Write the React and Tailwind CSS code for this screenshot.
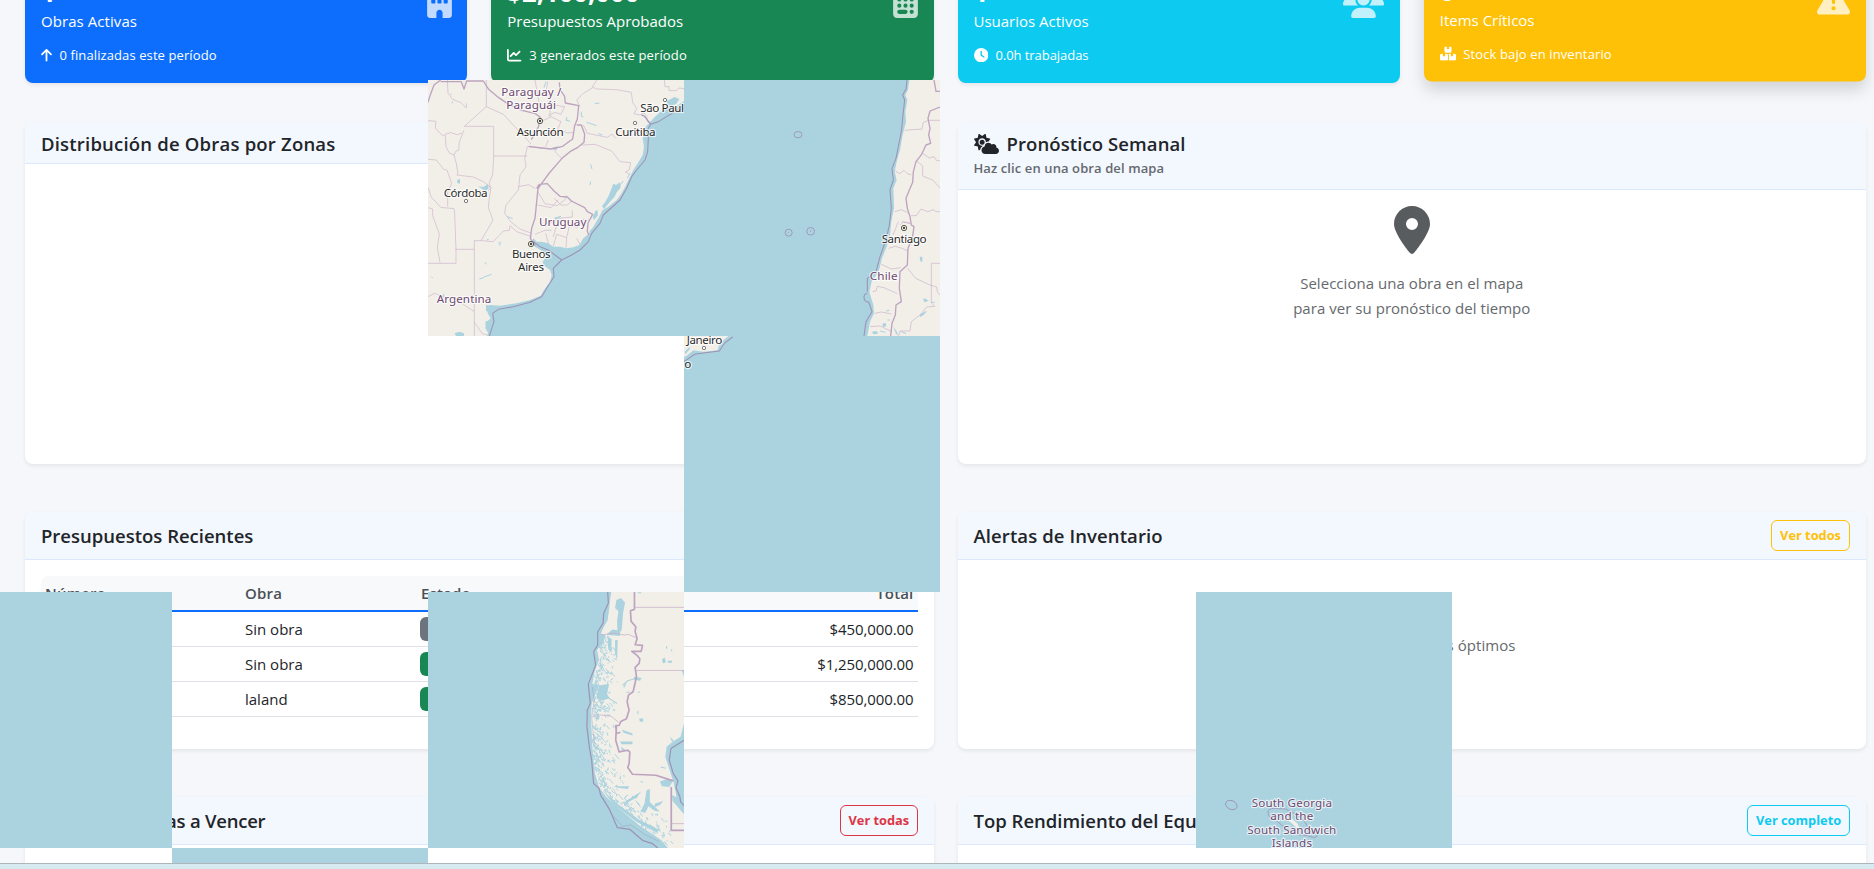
import React from "react";
import {
  FaArrowUp,
  FaBoxesStacked,
  FaBuilding,
  FaCalculator,
  FaChartLine,
  FaClock,
  FaCloudSun,
  FaLocationDot,
  FaTriangleExclamation,
  FaUsers,
} from "react-icons/fa6";

const LAND = "#f2efe9";
const WATER = "#aad3df";
const BORDER = "#c9afc8";
const COUNTRY = "#bda3bf";
const SEA_LINE = "#9c93b4";

function StatCard({ className, icon, iconClass = "", value, label, smallIcon, detail, labelClass = "", detailClass = "" }) {
  return (
    <div className={"flex h-[123px] justify-between rounded-lg px-4 pt-4 text-white " + className}>
      <div>
        <div className="h-[34px] text-[25.7px] leading-[34px] font-bold">{value}</div>
        <div className={"-mt-px text-[15px] leading-6 " + labelClass}>{label}</div>
        <div className={"mt-3 flex items-center gap-[7.5px] text-[13px] leading-5 " + detailClass}>
          <span className="text-[14.4px]">{smallIcon}</span>
          <span>{detail}</span>
        </div>
      </div>
      <div className={"mt-[9px] text-[33px] opacity-75 " + iconClass}>{icon}</div>
    </div>
  );
}

function Panel({ header, headerClass = "", className = "", children }) {
  return (
    <section className={"overflow-hidden rounded-lg bg-white shadow-[0_2px_4px_rgba(0,0,0,0.075)] " + className}>
      <header className={"flex items-center justify-between border-b border-[#dbe8fd] bg-[#f3f7fe] px-4 " + headerClass}>
        {header}
      </header>
      {children}
    </section>
  );
}

function Title({ className = "", children }) {
  return <h5 className={"text-[18.5px] leading-6 font-semibold whitespace-nowrap text-[#212529] " + className}>{children}</h5>;
}

function OutlineButton({ className, children }) {
  return (
    <button className={"h-[31px] rounded-md border px-2 text-[12.8px] leading-none font-bold whitespace-nowrap " + className}>
      {children}
    </button>
  );
}

function Label({ x, y, w, children, country }) {
  return (
    <text
      x={x}
      y={y}
      textLength={w}
      fontFamily="'Noto Sans', sans-serif"
      fontSize="35"
      fill={country ? "#6f4a72" : "#2b2b2b"}
      stroke="#ffffff"
      strokeOpacity="0.7"
      strokeWidth="7"
      strokeLinejoin="round"
      paintOrder="stroke"
    >
      {children}
    </text>
  );
}

function Capital({ x, y }) {
  return (
    <g>
      <circle cx={x} cy={y} r="8" fill={LAND} stroke="#3a3a30" strokeWidth="2.4" />
      <circle cx={x} cy={y} r="3.4" fill="#3a3a30" />
    </g>
  );
}

function City({ x, y }) {
  return <circle cx={x} cy={y} r="5" fill="#fff" stroke="#5c5c5c" strokeWidth="2.4" />;
}

function RioDeLaPlataTile() {
  return (
    <svg className="absolute top-[80px] left-[428px] size-64" viewBox="24 15 768 768" preserveAspectRatio="none">
      <rect x="24" y="15" width="768" height="768" fill={WATER} />
      <path
        fill={LAND}
        d="M24 15H792V78L770 92 745 97 720 112 705 125 690 142 672 160 668 190 672 215 668 240 655 262 640 285 628 310 618 330 605 355 590 375 565 395 548 405 535 430 520 455 505 478 490 490 478 510 460 517 440 520 420 515 400 515 385 505 365 500 350 500 340 490 335 500 345 515 362 525 372 535 375 550 368 560 372 572 390 585 395 600 390 620 372 645 362 662 330 675 290 685 240 692 212 690 200 694 203 715 212 730 200 742 196 760 205 775 200 783H24Z"
      />
      <path
        fill={WATER}
        d="M600 322L602 338 590 352 584 365 570 380 552 402 546 394 556 380 566 362 574 342 580 326 588 330ZM532 404L534 420 522 436 518 426 526 408ZM174 334L190 336 204 328 206 340 196 348 184 340ZM112 314l8-2v14l-8-2ZM398 218l14-4 0 8-12 4ZM198 690l14 2-2 18-12-2ZM196 740l16-6-2 24-12 2ZM104 775l14-5 14 5 0 8H108ZM740 78l24-12 14 6-10 16-24 6ZM403 428l20-6 0 4-18 8ZM72 655l2 12-8-2ZM524 462l-12 12-4-6 12-10Z"
      />
      <path
        fill="none"
        stroke={WATER}
        strokeWidth="3"
        d="M178 612l14-4M192 606l22-8M195 562l4 6M200 495l6-2M235 505l8-4M240 512v-8M512 268l4 14M484 110v14l6 2M524 85h14M500 142l30 10M535 176l12 4M262 425l16 6M34 605l4 4M600 330l10-12M630 295l-8 14M512 320l-2 10M378 20l-6 18M437 135l14 4M440 126v12M96 85l2-6M92 55l2 4"
      />
      <path
        fill="none"
        stroke={BORDER}
        strokeOpacity="0.75"
        strokeWidth="2.4"
        strokeLinejoin="round"
        d="M82 15l2 40 14 18 25 10 16 16V85M24 137l24 2-2 20 14 16 10 8 6-6 16-4 20 6 14-5M76 180l2 36 10 18 14 6 6-12 8-2 2-26 14-34M102 240l8 30 4 30M133 154H221V243H322M199 15V95L133 154M199 95L250 118 275 145 320 192 333 207M322 215L314 250 318 275 300 300 295 345 258 390 254 415 272 440 300 462 335 475M110 300l50 6 30 14 24 18-10 10M24 253l25 2 22 28 10 2 14 40-12 26V395M24 337l10 30 14 14 14 16 40 4 2 14 4 108V565H24M24 398l14 4 0 20 20 55-6 40 8 46M221 243L218 300 208 322 212 345 208 368 205 398 219 435 183 497H163V783M106 523H163M183 497l37 3 30-32 18-2 2-14 20 18 45 15M24 665l20-10 26 10 40 8 30 22 22 14M163 742l25 35 12 2M296 335l30-6 20 12M345 15l10 55 5 30M322 215l55 6M383 20l-6 40 28 30 30 6M385 122l20-10 18 6 10-22M353 145l40-20 30 15-10 22 30 12 18-2M365 180l30-8 20 12M385 195l-8 20M425 250l-20-20 6-12M390 100v25M480 95l-10-20 20-20 30-18 10 5 60 2 44 8 4 30 12 18-8 16 16 4 14-6 8 10 2 16 12 2M530 15l-14 22M733 15l2 20 12 0 0 12 22 0 8-8 16 2M490 150l12 25 60 12 14-10 12 14M485 210l40-2 50 20 25 32 32 3-4 22-12 6 12 6M353 350l22 36 36 6 24-18 4-12M353 390l40 8 22-24M403 370l20 20 20 0 14-14M375 455l22-15 20-10 40-4 0-20M400 486l8-30 14-22M345 478l30-12 20 0M385 505l-8-30M400 514l10-36 30 10-2 30M440 488l8-34 22 2M470 490l10 18M470 460l20-28 16 4"
      />
      <path
        fill="none"
        stroke={COUNTRY}
        strokeWidth="4"
        strokeLinejoin="round"
        d="M24 82l6-20 12-32 20-15M62 20l62 0 8 22 8-24 50 0 16 25 30 25 30 20 40 18 40 10 14 10-4 28-22 40M326 214l66 8 36-8 30-22 6-40 8-20 4-40-40-8-2-20-14-20-2-22M470 150l14 0 10 28-2 24-20 16-22 12-22 18-40 46-25 34-10 14M350 340l8-12 24-2 20 22 18 16 22 2 12 12 40 20 8 12 16 8-14 26-2 24 4 12M355 330l-4 40-6 60-10 30-4 30 15 22"
      />
      <path
        fill="none"
        stroke={SEA_LINE}
        strokeWidth="3.2"
        strokeLinejoin="round"
        d="M792 98L765 110 740 125 715 140 692 148 682 165 685 190 683 230 675 255 650 285 635 305 620 340 600 375 570 402 550 420 540 445 515 475 505 500 480 525 455 540 425 555 400 580 402 605 380 640 365 665 330 682 280 695 235 703 218 715 222 740 208 783M340 500l20 15 25 10 40 30M692 148l-18-24-10-4"
      />
      <Capital x={360} y={138} />
      <Capital x={333} y={507} />
      <City x={138} y={378} />
      <City x={645} y={144} />
      <City x={735} y={75} />
      <Label x={244} y={63} w={180} country>Paraguay /</Label>
      <Label x={259} y={103} w={149} country>Paraguái</Label>
      <Label x={290} y={183} w={141}>Asunción</Label>
      <Label x={586} y={183} w={121}>Curitiba</Label>
      <Label x={661} y={112} w={131}>São Paul</Label>
      <Label x={71} y={366} w={132}>Córdoba</Label>
      <Label x={357} y={452} w={142} country>Uruguay</Label>
      <Label x={276} y={549} w={116}>Buenos</Label>
      <Label x={294} y={588} w={78}>Aires</Label>
      <Label x={50} y={685} w={164} country>Argentina</Label>
    </svg>
  );
}

function PacificTile() {
  return (
    <svg className="absolute top-[80px] left-[684px] size-64" viewBox="12 15 768 768" preserveAspectRatio="none">
      <rect x="12" y="15" width="768" height="768" fill={WATER} />
      <path
        fill={LAND}
        d="M688 15L684 45 676 60 682 75 676 110 678 140 668 180 660 225 650 260 644 290 650 315 640 340 642 400 634 440 630 480 620 515 606 550 596 590 575 620 568 650 580 690 582 715 570 740 562 783H780V15Z"
      />
      <path
        fill={WATER}
        d="M730 670l8 2 8 6-14 4ZM719 720l14-10 8-2-10 12-10 6ZM607 746l10-2 2 10-10 2ZM719 545h8v16l-6-2ZM640 755l10 14 4 12-6-4ZM576 770l14-2 4 8-14 2Z"
      />
      <path fill="none" stroke={WATER} strokeWidth="3" d="M618 708l10-2M600 768l16 4M622 735h8M754 682h10M664 770l14 6" />
      <path
        fill="none"
        stroke={BORDER}
        strokeOpacity="0.8"
        strokeWidth="2.4"
        strokeLinejoin="round"
        d="M674 166l52-4 4-20 16-6H780M646 288l14 8 12-10 10 10 12 4M645 410l18-6 20 8 6 8M655 440l-8 20-8 20M665 440l26 6M626 520l20-6 20 6 16 8M604 568l30 14 28-4M578 650l10-2 4-14 20 4 40 18M584 715l20-4 30 6M570 755l30-2 34 16M728 235l20 14 14-4 8 12H780M710 258l18 15v30l30 12 22 24M693 422l16 0 14-20 20 8 18-6 6 6H780M683 580l24 30 38 18 25 8 2 14 8 10M780 565H754V684L764 694 740 696 720 720 694 740 690 768 660 768 656 783M660 450l10-10 20 4"
      />
      <path
        fill="none"
        stroke={COUNTRY}
        strokeWidth="4"
        strokeLinejoin="round"
        d="M762 15l6 34H780M780 96L750 108 744 130 750 160 746 180 752 205 738 210 725 238 708 260 700 290 698 322 688 345 678 370 682 400 690 425 694 450 702 455 697 490 684 520 682 570 660 590 658 640 664 680 648 690 646 720 636 745 632 783"
      />
      <path
        fill="none"
        stroke={SEA_LINE}
        strokeWidth="3.2"
        strokeLinejoin="round"
        d="M681 15L678 42 668 60 674 75 669 120 664 170 656 210 648 250 636 280 640 315 630 345 634 400 628 450 618 495 600 545 588 590 562 610 562 650M562 655c-14 0-14 26 4 26L576 710 558 740 552 783"
      />
      <g fill="none" stroke={SEA_LINE} strokeWidth="2.6">
        <ellipse cx="354" cy="179" rx="12" ry="9.5" />
        <circle cx="326" cy="473" r="10.5" />
        <circle cx="392" cy="469" r="11.5" />
        <circle cx="392" cy="468" r="1" />
        <circle cx="325" cy="473" r="0.5" />
      </g>
      <Capital x={672} y={459} />
      <Label x={605} y={503} w={135}>Santiago</Label>
      <Label x={569} y={614} w={84} country>Chile</Label>
    </svg>
  );
}

function RioDeJaneiroTile() {
  return (
    <svg className="absolute top-[336px] left-[684px] size-64" viewBox="12 783 768 768" preserveAspectRatio="none">
      <rect x="12" y="783" width="768" height="768" fill={WATER} />
      <path fill={LAND} d="M12 783H146L120 804 112 826 70 830 40 826 20 842 12 846Z" />
      <path fill={WATER} d="M14 830l14-14 2 6-14 16Z" />
      <path fill="none" stroke={SEA_LINE} strokeWidth="3.2" d="M158 786L134 804 118 828 70 834 44 838 12 860" />
      <City x={72} y={819} />
      <Label x={20} y={808} w={107}>Janeiro</Label>
      <Label x={13} y={880} w={18}>o</Label>
    </svg>
  );
}

// Deterministic fjord strokes that follow the ragged Patagonian coast.
function fjordPath() {
  let seed = 11;
  const rnd = () => {
    seed = (seed * 16807) % 2147483647;
    return seed / 2147483647;
  };
  const coast = [[220, 530, 575], [300, 520, 590], [370, 505, 580], [450, 502, 570], [550, 502, 565], [620, 508, 600], [690, 530, 620], [740, 590, 680], [800, 660, 770], [850, 710, 774]];
  let d = "";
  for (let i = 0; i < 520; i += 1) {
    const y = 225 + rnd() * 620;
    let k = 0;
    while (k < coast.length - 2 && coast[k + 1][0] < y) k += 1;
    const [y0, a0, b0] = coast[k];
    const [y1, a1, b1] = coast[k + 1];
    const t = Math.min(1, (y - y0) / (y1 - y0));
    const a = a0 + (a1 - a0) * t;
    const b = b0 + (b1 - b0) * t;
    const x = a + rnd() * rnd() * (b - a);
    const dx = (rnd() - 0.4) * 14;
    const dy = (rnd() - 0.4) * 18;
    d += `M${x.toFixed(0)} ${y.toFixed(0)}l${dx.toFixed(0)} ${dy.toFixed(0)} ${(dy * 0.5).toFixed(0)} ${(dx * 0.7).toFixed(0)}`;
  }
  return d;
}

function PatagoniaTile() {
  return (
    <svg className="absolute top-[592px] left-[428px] size-64" viewBox="9 96 765 767" preserveAspectRatio="none">
      <rect x="9" y="96" width="765" height="767" fill={WATER} />
      <path
        fill={LAND}
        d="M557 96L553 120 550 150 546 180 532 205 526 220 540 226 530 250 514 270 520 300 508 330 500 372 520 376 510 400 498 430 496 470 500 560 508 640 520 680 540 708 580 745 640 795 700 835 726 863H774V750L752 715 748 690 742 664 728 620 718 590 722 560 740 545 764 530 770 505 774 490V96Z"
      />
      <path
        fill={WATER}
        d="M572 120l14-6 12 14-6 30-4 50-12 20-2-44 4-30-10-10ZM560 208l24 4-2 16-40-4ZM520 376l30-4-6 30 8 12-24 8-16-10ZM546 232l12 4-2 40-8-8ZM568 240l8 0-2 60-6-20ZM588 508l32 12v6l-26-8ZM582 544h38v8h-32ZM585 560l22 14-18-4ZM662 690l10-4 0 40 30 28-14-2-20-14-10 20-14-4 12-24ZM600 722l46-28-12 16-30 18ZM702 664l22-8 16 8-10 16-22-2ZM688 730l24-8-10 12-18 8ZM570 678l40 0-4 8-34-4ZM530 690l50 44 60 44 60 30-6 8-60-30-70-54ZM738 704l20 10 16 36v12l-34-40ZM640 475h12v10h-10ZM708 298l8-6 4 14-8 4ZM726 302h12v6h-12ZM625 350l22 4-4 8-20-4ZM767 330l7 0v20ZM732 530l12 12-6 2Z"
      />
      <path fill="none" stroke={WATER} strokeWidth="2.8" strokeLinejoin="round" d={fjordPath()} />
      <path
        fill="none"
        stroke={WATER}
        strokeWidth="3"
        d="M590 376l16-14 26-8M602 396h10M636 396h6M636 452v10M722 258v8M736 268l2 6M704 620l16 4M644 664l8 2M600 370l-6 12M540 408l34 22M520 440l30 16M636 98l10 0"
      />
      <path
        fill="none"
        stroke={BORDER}
        strokeOpacity="0.85"
        strokeWidth="2.6"
        d="M628 142H774M632 331H774M526 225l40-6 30 6 12-2 24 10M500 470l22-6 34 4 22 18M736 680V810H774M736 790H774"
      />
      <path
        fill="none"
        stroke={COUNTRY}
        strokeWidth="5"
        strokeLinejoin="round"
        d="M626 96V148L614 152 616 184 630 200 628 215 634 235 628 254 650 256 646 274 618 274 634 286 642 296 640 310 628 322 632 350 622 395 608 405 604 425 610 450 602 476 585 484 580 496 570 496 572 520 584 516M572 496L570 540 580 575 606 570 612 576 610 610 606 622 620 642 690 645 742 662M736 680V810H774"
      />
      <path
        fill="none"
        stroke={SEA_LINE}
        strokeWidth="3.6"
        strokeLinejoin="round"
        d="M546 96L548 130 534 160 532 190 516 215 516 255 504 275 510 315 488 372 494 430 485 450 484 500 491 560 498 600 504 670 520 684 525 705 550 745 575 802 612 807 650 840 680 850 696 863M774 540L735 565 730 600 742 640 756 662 750 682 762 710 764 725 774 736"
      />
      <path fill="none" stroke={SEA_LINE} strokeOpacity="0.6" strokeWidth="2" d="M500 380l6 40-8 50 8 80M530 710l30 54 30 34 26-4 40 28 44 22" />
    </svg>
  );
}

function SouthGeorgiaTile() {
  return (
    <svg className="absolute top-[592px] left-[1196px] size-64" viewBox="48 36 768 768" preserveAspectRatio="none">
      <rect x="48" y="36" width="768" height="768" fill={WATER} />
      <g fill="none" stroke={SEA_LINE} strokeWidth="2.6">
        <ellipse cx="154" cy="675" rx="18" ry="13" transform="rotate(25 154 675)" />
        <path d="M268 710c-8-16-4-24 14-25l34 2 36 18 22 20 18 30 20 4c2 8-2 14-12 13l-22-6-26-2-40-22-20-18Z" />
      </g>
      <path fill={LAND} d="M320 712l16 4 18 16 4 14-10-4-20-18Z" />
      <Label x={215} y={681} w={241} country>South Georgia</Label>
      <Label x={271} y={721} w={129} country>and the</Label>
      <Label x={202} y={761} w={267} country>South Sandwich</Label>
      <Label x={275} y={801} w={121} country>Islands</Label>
    </svg>
  );
}

function BudgetRow({ work, badgeClass, total }) {
  return (
    <tr className="h-[35px] border-b border-[#dee2e6]">
      <td className="pl-1" />
      <td className="pl-1">{work}</td>
      <td className="pl-[3px]">
        <span className={"block h-6 w-20 rounded-md " + badgeClass} />
      </td>
      <td className="pr-1 text-right tracking-[-0.1px]">{total}</td>
    </tr>
  );
}

export default function App() {
  return (
    <div className="relative h-[869px] w-[1874px] overflow-hidden bg-[#f5f7fb] font-['Open_Sans',sans-serif] text-[#212529]">
      <main className="h-[863px] overflow-hidden pr-2 pl-[25px]">
        <div className="-mt-10 grid grid-cols-4 gap-6">
          <StatCard
            className="bg-[#0d6efd] shadow-[0_2px_4px_rgba(0,0,0,0.075)]"
            icon={<FaBuilding />}
            iconClass="-mr-[5px]"
            value="1"
            label="Obras Activas"
            labelClass="tracking-[0.07px]"
            smallIcon={<FaArrowUp className="w-[11px]" />}
            detail="0 finalizadas este período"
            detailClass="tracking-[0.1px]"
          />
          <StatCard
            className="bg-[#198754] shadow-[0_2px_4px_rgba(0,0,0,0.075)]"
            icon={<FaCalculator />}
            iconClass="-mr-[4px]"
            value="$2,100,000"
            label="Presupuestos Aprobados"
            smallIcon={<FaChartLine />}
            detail="3 generados este período"
            detailClass="tracking-[0.13px]"
          />
          <StatCard
            className="bg-[#0dcaf0] shadow-[0_2px_4px_rgba(0,0,0,0.075)]"
            icon={<FaUsers className="w-[41px]" />}
            value="1"
            label="Usuarios Activos"
            smallIcon={<FaClock />}
            detail="0.0h trabajadas"
            detailClass="tracking-[-0.05px]"
          />
          <StatCard
            className="-translate-y-[1.5px] bg-[#ffc107] shadow-[0_8px_16px_rgba(0,0,0,0.15)]"
            icon={<FaTriangleExclamation />}
            value="0"
            label="Items Críticos"
            smallIcon={<FaBoxesStacked className="w-[16px]" />}
            detail="Stock bajo en inventario"
            detailClass="tracking-[0.12px]"
          />
        </div>

        <div className="mt-[39px] grid grid-cols-2 gap-6">
          <Panel
            className="h-[342px]"
            headerClass="h-[42px] pt-[2px]"
            header={<Title className="tracking-[0.2px]">Distribución de Obras por Zonas</Title>}
          />
          <Panel
            className="h-[342px]"
            headerClass="h-[68px]"
            header={
              <div>
                <div className="-mt-[2px] flex items-center gap-2">
                  <FaCloudSun className="h-5 w-[25px]" />
                  <Title className="tracking-[0.1px]">Pronóstico Semanal</Title>
                </div>
                <div className="mt-[2px] text-[13px] leading-5 font-semibold tracking-[0.1px] text-[#65696e]">Haz clic en una obra del mapa</div>
              </div>
            }
          >
            <div className="flex flex-col items-center pt-4 text-[15px] leading-[25px] text-[#65696d]">
              <FaLocationDot className="size-12 text-[#595c5f]" />
              <p className="mt-[17px] text-center tracking-[0.04px]">
                Selecciona una obra en el mapa
                <br />
                para ver su pronóstico del tiempo
              </p>
            </div>
          </Panel>
        </div>

        <div className="mt-12 grid grid-cols-2 gap-6">
          <Panel className="h-[237px]" headerClass="h-12" header={<Title>Presupuestos Recientes</Title>}>
            <div className="px-4 pt-4">
              <table className="w-full table-fixed border-separate border-spacing-0 text-[15px] leading-6 [&_td]:border-b [&_td]:border-[#dee2e6] [&_th]:border-b-2 [&_th]:border-[#0d6efd]">
                <colgroup>
                  <col className="w-[200px]" />
                  <col className="w-[176px]" />
                  <col className="w-[180px]" />
                  <col />
                </colgroup>
                <thead className="text-left text-[#495057]">
                  <tr className="h-9">
                    <th className="rounded-tl-lg bg-[#f8f9fa] pl-1 font-semibold tracking-[0.18px]">Número</th>
                    <th className="bg-[#f8f9fa] pl-1 font-semibold tracking-[0.18px]">Obra</th>
                    <th className="bg-[#f8f9fa] pl-1 font-semibold tracking-[0.18px]">Estado</th>
                    <th className="bg-[#f8f9fa] pr-1 text-right font-semibold tracking-[0.18px]">Total</th>
                  </tr>
                </thead>
                <tbody>
                  <BudgetRow work="Sin obra" badgeClass="bg-[#6c757d]" total="$450,000.00" />
                  <BudgetRow work="Sin obra" badgeClass="bg-[#198754]" total="$1,250,000.00" />
                  <BudgetRow work="laland" badgeClass="bg-[#198754]" total="$850,000.00" />
                </tbody>
              </table>
            </div>
          </Panel>
          <Panel
            className="h-[237px]"
            headerClass="h-12"
            header={
              <>
                <Title className="tracking-[0.1px]">Alertas de Inventario</Title>
                <OutlineButton className="w-[79px] border-[#ffc107] text-[#ffc107]">Ver todos</OutlineButton>
              </>
            }
          >
            <p className="pt-[73px] text-center text-[15px] leading-6 tracking-[0.05px] text-[#65696d]">Inventario en niveles óptimos</p>
          </Panel>
        </div>

        <div className="mt-12 grid grid-cols-2 gap-6">
          <Panel
            className="h-[237px]"
            headerClass="h-12"
            header={
              <>
                <Title className="tracking-[-0.23px]">Tareas Próximas a Vencer</Title>
                <OutlineButton className="w-[78px] border-[#dc3545] text-[#dc3545]">Ver todas</OutlineButton>
              </>
            }
          />
          <Panel
            className="h-[237px]"
            headerClass="h-12"
            header={
              <>
                <Title>Top Rendimiento del Equipo</Title>
                <OutlineButton className="w-[103px] border-[#0dcaf0] text-[#0dcaf0]">Ver completo</OutlineButton>
              </>
            }
          />
        </div>
      </main>

      <RioDeLaPlataTile />
      <PacificTile />
      <RioDeJaneiroTile />
      <PatagoniaTile />
      <SouthGeorgiaTile />
      <div className="absolute top-[592px] left-0 h-64 w-[172px] bg-[#aad3df]" />
      <div className="absolute top-[848px] left-[172px] h-[15px] w-64 bg-[#aad3df]" />

      <footer className="h-[6px] border-t border-[#aeb6ba] bg-[#d8eaf1]" />
    </div>
  );
}
